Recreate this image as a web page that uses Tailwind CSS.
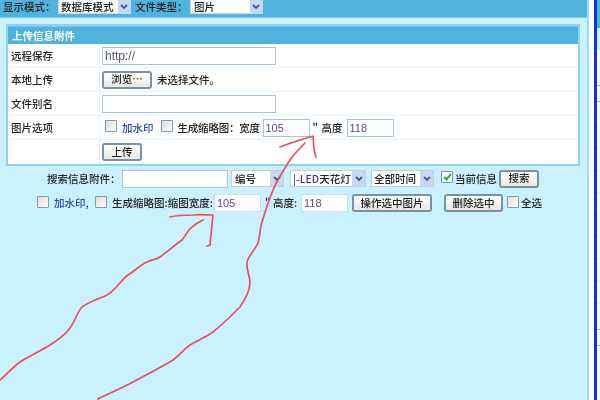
<!DOCTYPE html>
<html lang="zh-CN">
  <head>
    <meta charset="UTF-8" />
    <title>上传信息附件</title>
    <script src="https://cdn.jsdelivr.net/npm/@tailwindcss/browser@4"></script>
  </head>
  <body class="m-0 bg-white overflow-hidden">
    <div class="relative flex w-[600px] h-[400px] overflow-hidden blur-[0.5px] font-['Noto_Sans_CJK_SC','Liberation_Sans',sans-serif] text-[10.5px] font-medium text-[#222]">
      <!-- main panel -->
      <div class="w-[589px] h-full shrink-0 bg-[#c9f1ff] border-r-2 border-[#9fdcf3]">
        <!-- top bar -->
        <div class="flex items-start h-[18px] bg-[#4fb3dd] border-b border-[#7cc6e6] pl-[3px]">
          <span class="w-[55px] leading-[14px]">显示模式：</span>
          <div class="flex w-[73px] h-[14px] bg-white border border-[#c5dbe8] border-t-0">
            <span class="flex-1 pl-[2px] leading-[14px]">数据库模式</span>
            <span class="flex items-center justify-center w-[12px] bg-[#c9d8f2]">
              <svg width="8" height="6" viewBox="0 0 8 6" fill="none" stroke="#3a5a9a" stroke-width="1.8"><path d="M1 1l3 3 3-3" /></svg>
            </span>
          </div>
          <span class="w-[55px] ml-[4px] leading-[14px]">文件类型：</span>
          <div class="flex w-[73px] h-[14px] bg-white border border-[#c5dbe8] border-t-0">
            <span class="flex-1 pl-[3px] leading-[14px]">图片</span>
            <span class="flex items-center justify-center w-[12px] bg-[#c9d8f2]">
              <svg width="8" height="6" viewBox="0 0 8 6" fill="none" stroke="#3a5a9a" stroke-width="1.8"><path d="M1 1l3 3 3-3" /></svg>
            </span>
          </div>
        </div>

        <!-- upload table -->
        <div class="mt-[6px] ml-[6px] w-[574px] h-[142px] bg-white border-2 border-[#8dd2ef] flex flex-col">
          <div class="flex items-center h-[18px] pl-[4px] bg-[#4fb3dd] border-t border-[#7cc6e6] text-white font-bold">上传信息附件</div>
          <div class="flex h-[24px] border-b border-[#e2f5fc]">
            <div class="flex items-center w-[92px] pl-[3px] border-r border-[#e2f5fc]">远程保存</div>
            <div class="flex items-center pl-[2px]">
              <input class="w-[174px] h-[18px] px-[2px] border border-[#a9c4d8] text-[12px] text-[#555566] font-['Liberation_Sans',sans-serif]" value="http://" />
            </div>
          </div>
          <div class="flex h-[24px] border-b border-[#e2f5fc]">
            <div class="flex items-center w-[92px] pl-[3px] border-r border-[#e2f5fc]">本地上传</div>
            <div class="flex items-center pl-[2px]">
              <button class="w-[50px] h-[18px] rounded-[3px] border-2 border-[#7693ad] bg-gradient-to-b from-white to-[#ebe8dc] text-[10.5px] leading-none">浏览…</button>
              <span class="ml-[5px]">未选择文件。</span>
            </div>
          </div>
          <div class="flex h-[24px] border-b border-[#e2f5fc]">
            <div class="flex items-center w-[92px] pl-[3px] border-r border-[#e2f5fc]">文件别名</div>
            <div class="flex items-center pl-[2px]">
              <input class="w-[174px] h-[18px] border border-[#a9c4d8]" />
            </div>
          </div>
          <div class="flex h-[24px] border-b border-[#e2f5fc]">
            <div class="flex items-center w-[92px] pl-[3px] border-r border-[#e2f5fc]">图片选项</div>
            <div class="flex items-center pl-[5px]">
              <span class="w-[12px] h-[12px] -mt-[3px] rounded-[1px] border border-[#7d99b4] bg-gradient-to-br from-[#dcdcd6] to-white"></span>
              <span class="ml-[5px] text-[#2a49a8]">加水印</span>
              <span class="w-[12px] h-[12px] ml-[7px] -mt-[3px] rounded-[1px] border border-[#7d99b4] bg-gradient-to-br from-[#dcdcd6] to-white"></span>
              <span class="ml-[5px] w-[85px] whitespace-nowrap tracking-[-0.2px]">生成缩略图：宽度</span>
              <input class="w-[47px] h-[18px] px-[2px] border border-[#a9c4d8] text-[11px] text-[#5c4a8c] font-['Liberation_Sans',sans-serif]" value="105" />
              <span class="ml-[3px] w-[9px]">"</span>
              <span>高度</span>
              <input class="w-[47px] h-[18px] ml-[4px] px-[2px] border border-[#a9c4d8] text-[11px] text-[#5c4a8c] font-['Liberation_Sans',sans-serif]" value="118" />
            </div>
          </div>
          <div class="flex flex-1">
            <div class="w-[92px] border-r border-[#e2f5fc]"></div>
            <div class="flex items-center pl-[2px]">
              <button class="w-[40px] h-[18px] rounded-[3px] border-2 border-[#7693ad] bg-gradient-to-b from-white to-[#ebe8dc] text-[10.5px] leading-none">上传</button>
            </div>
          </div>
        </div>

        <!-- search row -->
        <div class="flex items-center h-[19px] mt-[3px] pl-[47px]">
          <span class="w-[75px]">搜索信息附件：</span>
          <input class="w-[106px] h-[18px] bg-white border border-[#a9c4d8]" />
          <div class="flex w-[53px] h-[17px] ml-[3px] bg-white border border-[#b7d3e2]">
            <span class="flex-1 pl-[3px] leading-[15px]">编号</span>
            <span class="flex items-center justify-center w-[13px] bg-[#c9d8f2]">
              <svg width="8" height="6" viewBox="0 0 8 6" fill="none" stroke="#3a5a9a" stroke-width="1.8"><path d="M1 1l3 3 3-3" /></svg>
            </span>
          </div>
          <div class="flex w-[76px] h-[17px] ml-[6px] bg-white border border-[#b7d3e2]">
            <span class="flex-1 pl-[2px] leading-[15px] whitespace-nowrap text-[#5b2f8e]">|-LED<span class="text-[#222]">天花灯</span></span>
            <span class="flex items-center justify-center w-[13px] bg-[#c9d8f2]">
              <svg width="8" height="6" viewBox="0 0 8 6" fill="none" stroke="#3a5a9a" stroke-width="1.8"><path d="M1 1l3 3 3-3" /></svg>
            </span>
          </div>
          <div class="flex w-[63px] h-[17px] ml-[5px] bg-white border border-[#b7d3e2]">
            <span class="flex-1 pl-[2px] leading-[15px] whitespace-nowrap">全部时间</span>
            <span class="flex items-center justify-center w-[13px] bg-[#c9d8f2]">
              <svg width="8" height="6" viewBox="0 0 8 6" fill="none" stroke="#3a5a9a" stroke-width="1.8"><path d="M1 1l3 3 3-3" /></svg>
            </span>
          </div>
          <span class="flex items-center justify-center w-[12px] h-[12px] ml-[7px] -mt-[3px] rounded-[1px] border border-[#7d99b4] bg-white">
            <svg width="9" height="8" viewBox="0 0 9 8" fill="none" stroke="#22b14c" stroke-width="2"><path d="M1 4l2.500 2.500L8 1" /></svg>
          </span>
          <span class="ml-[2px] w-[44px]">当前信息</span>
          <button class="w-[40px] h-[18px] rounded-[3px] border-2 border-[#7693ad] bg-gradient-to-b from-white to-[#ebe8dc] text-[10.5px] leading-none">搜索</button>
        </div>

        <!-- batch row -->
        <div class="flex items-center h-[18px] mt-[6px] pl-[37px]">
          <span class="w-[12px] h-[12px] -mt-[3px] rounded-[1px] border border-[#7d99b4] bg-gradient-to-br from-[#dcdcd6] to-white"></span>
          <span class="ml-[5px] w-[41px] text-[#2a49a8]">加水印,</span>
          <span class="w-[12px] h-[12px] -mt-[3px] rounded-[1px] border border-[#7d99b4] bg-gradient-to-br from-[#dcdcd6] to-white"></span>
          <span class="ml-[5px] w-[102px] whitespace-nowrap">生成缩略图:缩图宽度:</span>
          <input class="w-[47px] h-[18px] px-[2px] bg-white border border-[#c5e0ec] text-[11px] text-[#5c4a8c] font-['Liberation_Sans',sans-serif]" value="105" />
          <span class="ml-[4px] w-[8px]">"</span>
          <span class="w-[28px]">高度:</span>
          <input class="w-[47px] h-[18px] px-[2px] bg-white border border-[#c5e0ec] text-[11px] text-[#5c4a8c] font-['Liberation_Sans',sans-serif]" value="118" />
          <button class="w-[80px] h-[18px] ml-[4px] rounded-[3px] border-2 border-[#7693ad] bg-gradient-to-b from-white to-[#ebe8dc] text-[10.5px] leading-none">操作选中图片</button>
          <button class="w-[59px] h-[18px] ml-[12px] rounded-[3px] border-2 border-[#7693ad] bg-gradient-to-b from-white to-[#ebe8dc] text-[10.5px] leading-none">删除选中</button>
          <span class="w-[12px] h-[12px] ml-[4px] -mt-[3px] rounded-[1px] border border-[#7d99b4] bg-gradient-to-br from-[#dcdcd6] to-white"></span>
          <span class="ml-[2px]">全选</span>
        </div>
      </div>

      <!-- next window edge -->
      <div class="w-[5px] shrink-0 bg-white"></div>
      <div class="w-[3px] shrink-0 bg-[#0a35d8]"></div>
      <div class="flex-1 flex flex-col bg-white">
        <div class="h-[28px] shrink-0 bg-[#4fb3dd]"></div>
        <div class="h-[22px] shrink-0 bg-[#c9f1ff]"></div>
        <div class="h-[36px] shrink-0 border-b border-[#a8a8b8]"></div>
        <div class="h-[16px] shrink-0 border-b border-[#a8a8b8]"></div>
        <div class="h-[25px] shrink-0 border-b border-[#e8eef2]"></div>
        <div class="h-[22px] shrink-0 border-b border-[#e8eef2]"></div>
        <div class="h-[22px] shrink-0 border-b border-[#e8eef2]"></div>
        <div class="h-[22px] shrink-0 border-b border-[#e8eef2]"></div>
        <div class="h-[22px] shrink-0 border-b border-[#e8eef2]"></div>
        <div class="h-[22px] shrink-0 border-b border-[#e8eef2]"></div>
        <div class="h-[22px] shrink-0 border-b border-[#e8eef2]"></div>
        <div class="h-[22px] shrink-0 border-b border-[#e8eef2]"></div>
        <div class="h-[23px] shrink-0 border-b border-[#e8eef2]"></div>
        <div class="h-[26px] shrink-0 border-b border-[#a8b4d0]"></div>
        <div class="h-[16px] shrink-0 border-b border-[#a8b4d0]"></div>
      </div>

      <!-- red hand drawn arrows on top of the screenshot -->
      <svg class="absolute inset-0" width="600" height="400" viewBox="0 0 600 400" fill="none" stroke="#ee4f5a" stroke-width="1.700" stroke-linecap="round" stroke-linejoin="round">
        <path d="M0 380C6 375 12 368 20 362C30 356 40 351 50 345C58 340 65 335 70 328C76 320 77 312 82 307C90 301 99 299 107 295C116 290 120 281 128 275C135 271 140 265 147 262C153 259 156 260 160 257C168 251 175 245 182 240C186 235 188 230 191 228C195 224 199 222 203 220" />
        <path d="M170 217C178 215 186 215 193 215C200 214 207 215 213 215C212 225 211 235 210 245L207 246" />
        <path d="M98 399C110 393 122 388 133 382C146 375 160 368 173 360C180 355 184 349 190 345C198 340 206 337 213 332C222 325 232 315 240 307C246 298 250 290 250 283C250 275 246 270 247 262C249 255 255 250 258 243C260 236 260 228 262 222C265 212 269 200 273 190C278 178 285 168 290 160C295 153 300 148 305 143" />
        <path d="M280 147C290 143 300 140 310 137L313 136C314 143 313 150 316 157" />
      </svg>
    </div>
  </body>
</html>
